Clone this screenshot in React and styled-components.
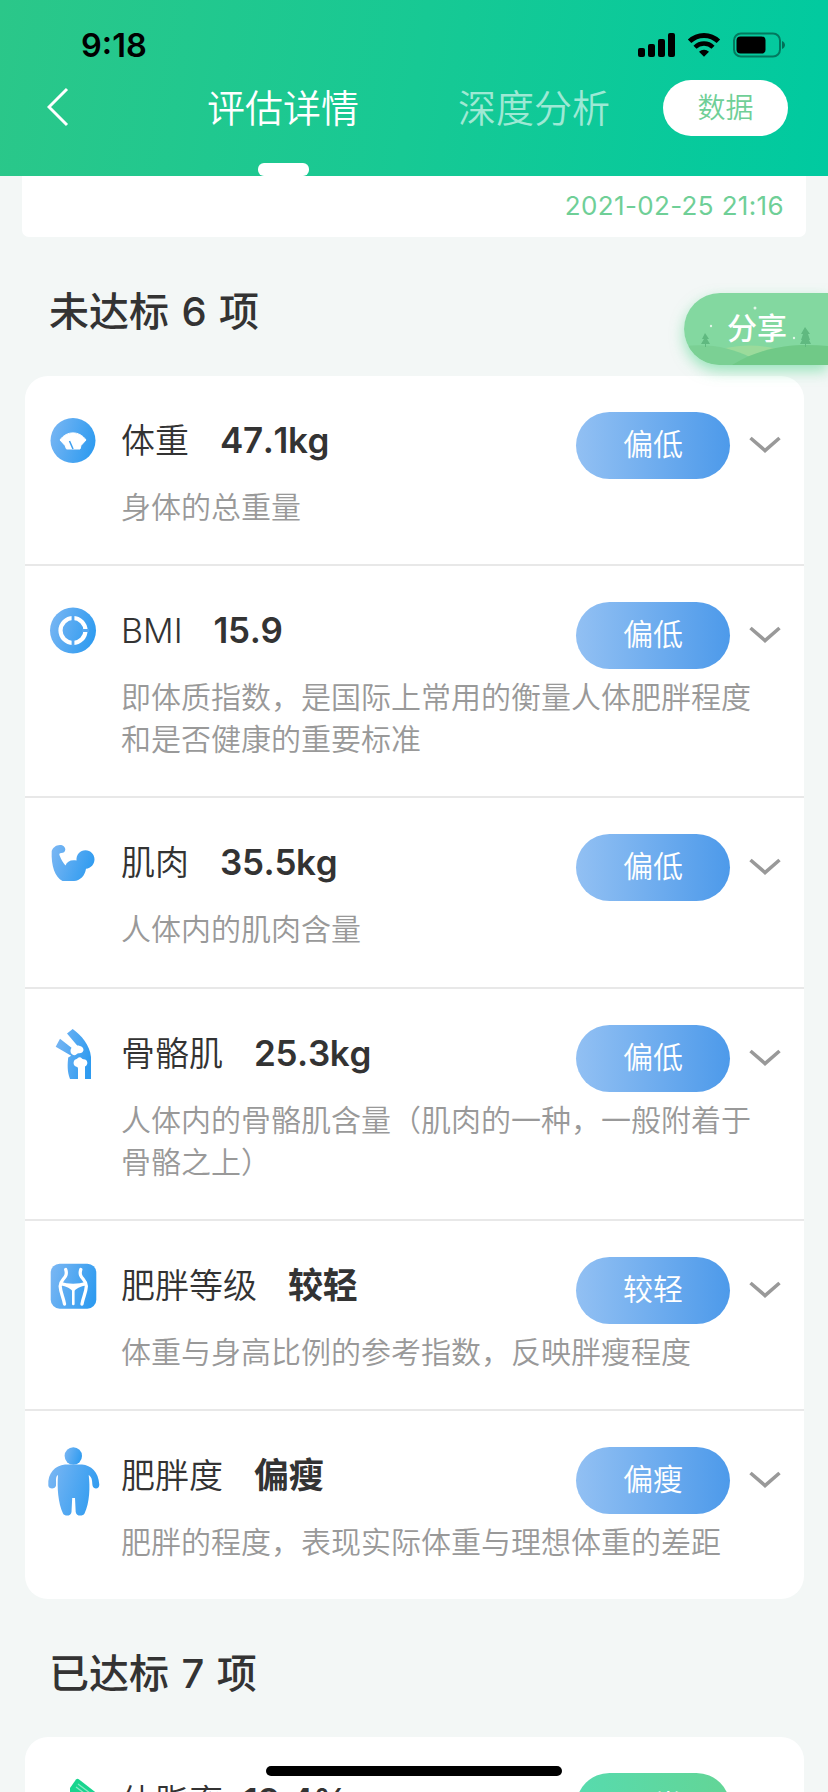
import React from "react";
import styled, { createGlobalStyle } from "styled-components";

const GlobalStyle = createGlobalStyle`
  * {
    box-sizing: border-box;
  }
  body {
    margin: 0;
    background: #f3f7f6;
    font-family: Inter, "Noto Sans CJK SC", sans-serif;
    color: #333;
  }
`;

const Screen = styled.div`
  position: relative;
  width: 828px;
  height: 1792px;
  overflow: hidden;
  background: #f3f7f6;
`;

const Header = styled.header`
  height: 176px;
  background: linear-gradient(100deg, #2bc789 0%, #17c994 50%, #00caa0 100%);
`;

const StatusBar = styled.div`
  height: 80px;
  padding: 10px 43px 0 81px;
  display: flex;
  align-items: center;
  justify-content: space-between;
  color: #000;
`;

const Clock = styled.span`
  padding-top: 2px;
  font-size: 32.5px;
  font-weight: 600;
  line-height: 40px;
`;

const NavBar = styled.nav`
  height: 96px;
  padding: 0 40px 0 47px;
  display: flex;
  align-items: flex-start;
`;

const BackIcon = styled.svg`
  width: 22px;
  height: 40px;
  margin-top: 7px;
`;

const Tab = styled.div`
  width: 152px;
  height: 96px;
  margin-left: ${(props) => props.$gap}px;
  display: flex;
  flex-direction: column;
  align-items: center;
  justify-content: space-between;
  font-size: 38px;
  font-weight: 350;
  line-height: 56px;
  white-space: nowrap;
  color: ${(props) => (props.$active ? "#fff" : "rgba(255, 255, 255, 0.6)")};
`;

const TabMark = styled.span`
  width: 51px;
  height: 13px;
  border-radius: 6px;
  background: #fff;
`;

const DataButton = styled.button`
  width: 125px;
  height: 56px;
  margin-left: auto;
  padding: 0;
  border: none;
  border-radius: 28px;
  background: #fff;
  color: #6fcf97;
  font-family: inherit;
  font-size: 28px;
  font-weight: 350;
  line-height: 57px;
`;

const DateCard = styled.div`
  height: 61px;
  margin: 0 22px;
  padding: 10px 22px 0 0;
  border-radius: 0 0 7px 7px;
  background: #fff;
  color: #6fcf97;
  font-size: 26px;
  line-height: 40px;
  letter-spacing: 0.35px;
  text-align: right;
`;

const SectionTitle = styled.h2`
  height: 60px;
  margin: ${(props) => props.$top}px 0 ${(props) => props.$bottom}px 49px;
  font-size: 40px;
  font-weight: 500;
  line-height: 61px;
  word-spacing: 1.8px;
`;

const Card = styled.section`
  margin: 0 24px 0 25px;
  border-radius: 23px;
  background: #fff;
`;

const Row = styled.article`
  display: flex;
  align-items: flex-start;
  padding: 36px 0;
  border-bottom: 2px solid #e8e8e8;

  &:last-child {
    border-bottom: none;
  }
`;

const IconSlot = styled.div`
  width: 96px;
  height: 70px;
  padding-left: 18px;
  flex: none;

  svg {
    display: block;
  }
`;

const RowBody = styled.div`
  flex: 1;
`;

const RowHead = styled.div`
  height: 67px;
  display: flex;
  align-items: flex-start;
`;

const Name = styled.span`
  font-size: 34px;
  font-weight: 350;
  line-height: 58px;
`;

const Value = styled.span`
  margin-left: ${(props) => props.$gap || 31}px;
  font-size: 35px;
  font-weight: 600;
  font-kerning: none;
  letter-spacing: -0.35px;
  line-height: 56px;
  flex: 1;
`;

const Pill = styled.span`
  width: 154px;
  height: 67px;
  border-radius: 34px;
  background: ${(props) =>
    props.$good
      ? "linear-gradient(90deg, #57dbae, #63d596)"
      : "linear-gradient(90deg, #92c0f3, #4d9aea)"};
  color: #fff;
  font-size: 30px;
  font-weight: 350;
  line-height: 64px;
  text-align: center;
`;

const ArrowIcon = styled.svg`
  width: 32px;
  height: 18px;
  margin: 24px 23px 0 19px;
`;

const Description = styled.p`
  width: 640px;
  margin: 7px 0 0;
  color: #999;
  font-size: 30px;
  font-weight: 350;
  line-height: 42.15px;
`;

const ShareTag = styled.div`
  position: absolute;
  top: 293px;
  right: 0;
  width: 144px;
  height: 72px;
  padding-left: 43px;
  border-radius: 36px 0 0 36px;
  box-shadow: 0 6px 14px rgba(80, 214, 140, 0.55);
  color: #fff;
  font-size: 30px;
  font-weight: 500;
  line-height: 71px;

  svg {
    position: absolute;
    inset: 0;
    border-radius: 36px 0 0 36px;
  }
  span {
    position: relative;
  }
`;

const HomeIndicator = styled.div`
  position: absolute;
  top: 1766px;
  left: 266px;
  width: 296px;
  height: 10px;
  border-radius: 5px;
  background: #000;
`;

const StatusIcons = () => (
  <svg width="150" height="28" viewBox="0 0 150 28">
    <rect x="3" y="17" width="7" height="9" rx="2" />
    <rect x="13" y="13" width="7" height="13" rx="2" />
    <rect x="23" y="8" width="7" height="18" rx="2" />
    <rect x="33" y="2" width="7" height="24" rx="2" />
    <g fill="none" stroke="#000" strokeWidth="5">
      <path d="M54.6 10.3a20.5 20.5 0 0 1 28.8 0" />
      <path d="M60 16.2a12.8 12.8 0 0 1 18 0" strokeWidth="4.4" />
    </g>
    <path d="M69 25.8l-5-5a7.4 7.4 0 0 1 10 0z" />
    <rect x="99" y="2.5" width="46" height="23" rx="7" fill="none" stroke="#000" strokeOpacity="0.4" strokeWidth="2" />
    <rect x="101.5" y="5.5" width="29" height="17" rx="4" />
    <path d="M147 10c4 2 4 6 0 8z" opacity="0.45" />
  </svg>
);

const BlueGradient = ({ id }) => (
  <linearGradient id={id} x1="0" y1="0.3" x2="1" y2="0.6">
    <stop offset="0" stopColor="#76b5f3" />
    <stop offset="1" stopColor="#2e9bf0" />
  </linearGradient>
);

const WeightIcon = () => (
  <svg width="60" height="70" viewBox="0 0 60 70">
    <defs><BlueGradient id="weight" /></defs>
    <circle cx="30" cy="28.5" r="22.5" fill="url(#weight)" />
    <path d="M17 28c6.500-9.500 19.500-9.500 26 0l-5 5.500-1 3.500H23.500l-1.500-3.500z" fill="#fff" stroke="#fff" strokeLinejoin="round" />
    <path d="M26.5 29l3.500 8" stroke="#3d9ff0" strokeWidth="1.5" />
  </svg>
);

const BmiIcon = () => (
  <svg width="60" height="70" viewBox="0 0 60 70">
    <defs><BlueGradient id="bmi" /></defs>
    <circle cx="30" cy="28.5" r="23" fill="url(#bmi)" />
    <circle cx="30" cy="28.5" r="12.5" fill="none" stroke="#fff" strokeWidth="4.2" />
    <path d="M30 13v6M30 38v6M39 28.5h7" stroke="#55a8f2" strokeWidth="2.8" />
  </svg>
);

const MuscleIcon = () => (
  <svg width="60" height="70" viewBox="0 0 60 70">
    <defs><BlueGradient id="muscle" /></defs>
    <path
      d="M8.7 17c1-3 4-6 8.300-6 3 0 5.300 2 5.300 4.500 0 2.500-2 3.500-4 3.500-2 0-2.500 1-1.500 3 1.500 4 3.500 7 5.700 9.500 1.500-4 5-6 11-5C33 21 37 16.300 42.500 16.300c5 0 9 4 9 9 0 5-3.500 9-8.500 9.500-1 7-6 12-12 12.200H19.500C12 43 8 32 8.700 17z"
      fill="url(#muscle)"
    />
  </svg>
);

const BoneIcon = () => (
  <svg width="60" height="70" viewBox="0 0 60 70">
    <defs><BlueGradient id="bone" /></defs>
    <path
      d="M24 8.5l5.700-4.500C38 10 47 20 48 32v22h-6V41.500c4-2 2.500-7.500-1.500-7.300-1.500 0-2-2-3.800-2-1.700 0-2 1.500-3.700 2-3.500 1-3 7 .5 7.500.8 0 1.500.8 1.500 2V54h-8c-3-8-2.500-15-1.800-21.500l3-1.700-15.500-9 4.300-8 11.500 9c-2 3-1 7 3 7.500 1.500 0 2.500-2 4.300-2 5 .5 6.500-5 2-7-1-.5-3 0-4.500-1.800z"
      fill="url(#bone)"
    />
  </svg>
);

const BodyShapeIcon = () => (
  <svg width="60" height="70" viewBox="0 0 60 70">
    <defs><BlueGradient id="shape" /></defs>
    <rect x="7.7" y="6.7" width="45.6" height="45" rx="9" fill="url(#shape)" />
    <g fill="none" stroke="#fff" strokeWidth="3.3" strokeLinecap="round">
      <path d="M22.7 12.5c3 9-6 9-5.500 17 .3 6 3 10 4.300 17.500M37.800 12.500c-3 9 6 9 5.500 17-.3 6-3 10-4.300 17.500" />
      <path d="M30.3 34v13" strokeWidth="2.6" />
    </g>
    <path d="M17.5 24.5c7 3 18 3 25.500 0l.5 4c-6 .5-11 3-13.200 7-2-4-7-6.500-13-7z" fill="#fff" />
  </svg>
);

const FatBodyIcon = () => (
  <svg width="60" height="72" viewBox="0 0 60 72">
    <defs><BlueGradient id="fat" /></defs>
    <g fill="url(#fat)">
      <circle cx="30.3" cy="9" r="8.7" />
      <path d="M22 17.5h17c9 1 16.500 7 17.300 20 .2 5-6 5-6.800 1-.5-4 0-8-3.800-10.500 1.500 12 1 28-4.200 38.500-1.500 3-8.500 3-8.800-1.500L32 51h-2.800L28.500 65c-.3 4.500-7 4.500-8.500 1.500C15 56 14 40 15 28c-3 2-1.500 6-2 10.500-.5 4-7.500 4-7.700 0C4.500 26 12 18.500 22 17.500z" />
    </g>
  </svg>
);

const FatRateIcon = () => (
  <svg width="60" height="70" viewBox="0 0 60 70">
    <path d="M27 22v-7l6-8.500c.8-1 1.800-1 2.800-.3L56 22 44 44 27 32z" fill="#19d58f" />
    <path d="M35 11l12 9M33 14l12 9" stroke="#8be9c4" strokeWidth="1.3" />
  </svg>
);

const failedItems = [
  { icon: <WeightIcon />, name: "体重", value: "47.1kg", level: "偏低", text: "身体的总重量" },
  { icon: <BmiIcon />, name: "BMI", value: "15.9", level: "偏低", text: "即体质指数，是国际上常用的衡量人体肥胖程度和是否健康的重要标准" },
  { icon: <MuscleIcon />, name: "肌肉", value: "35.5kg", level: "偏低", text: "人体内的肌肉含量" },
  { icon: <BoneIcon />, name: "骨骼肌", value: "25.3kg", level: "偏低", text: "人体内的骨骼肌含量（肌肉的一种，一般附着于骨骼之上）" },
  { icon: <BodyShapeIcon />, name: "肥胖等级", value: "较轻", level: "较轻", text: "体重与身高比例的参考指数，反映胖瘦程度" },
  { icon: <FatBodyIcon />, name: "肥胖度", value: "偏瘦", level: "偏瘦", text: "肥胖的程度，表现实际体重与理想体重的差距" },
];

const passedItems = [
  { icon: <FatRateIcon />, name: "体脂率", value: "18.4%", level: "正常", good: true, gap: 20 },
];

const Item = ({ icon, name, value, level, text, good, gap }) => (
  <Row>
    <IconSlot>{icon}</IconSlot>
    <RowBody>
      <RowHead>
        <Name>{name}</Name>
        <Value $gap={gap}>{value}</Value>
        <Pill $good={good}>{level}</Pill>
        <ArrowIcon viewBox="0 0 32 18">
          <path d="M1.5 2L16 14.5 30.5 2" fill="none" stroke="#999" strokeWidth="3.6" />
        </ArrowIcon>
      </RowHead>
      {text && <Description>{text}</Description>}
    </RowBody>
  </Row>
);

export default function App() {
  return (
    <Screen>
      <GlobalStyle />
      <Header>
        <StatusBar>
          <Clock>9:18</Clock>
          <StatusIcons />
        </StatusBar>
        <NavBar>
          <BackIcon viewBox="0 0 22 40">
            <path d="M20 2L2 20l18 18" fill="none" stroke="#fff" strokeWidth="3" />
          </BackIcon>
          <Tab $active $gap={138}>
            评估详情
            <TabMark />
          </Tab>
          <Tab $gap={99}>深度分析</Tab>
          <DataButton>数据</DataButton>
        </NavBar>
      </Header>
      <DateCard>2021-02-25 21:16</DateCard>
      <SectionTitle $top={44} $bottom={35}>未达标 6 项</SectionTitle>
      <Card>
        {failedItems.map((item) => (
          <Item key={item.name} {...item} />
        ))}
      </Card>
      <SectionTitle $top={44} $bottom={34}>已达标 7 项</SectionTitle>
      <Card>
        {passedItems.map((item) => (
          <Item key={item.name} {...item} />
        ))}
      </Card>
      <ShareTag>
        <svg width="144" height="72" viewBox="0 0 144 72">
          <rect width="144" height="72" fill="#83d8a0" />
          <path d="M40 56c18-5 38-4 52 0l-26 10z" fill="#9bdb9b" />
          <path d="M0 53c26-3 48 2 66 11v8H0z" fill="#7bd094" />
          <path d="M48 72c30-18 60-22 96-19v19z" fill="#70c987" />
          <path d="M21 40l4 6-2 0 3 5h-4v3h-1v-3h-4l3-5h-2z" fill="#60b980" />
          <path d="M121 34l5 7h-2l2 6h-1l2 4h-5v3h-1v-3h-5l2-4h-1l2-6h-2z" fill="#60b980" />
          <g fill="#fff" opacity="0.75">
            <circle cx="27" cy="33" r="1.2" />
            <circle cx="71" cy="15" r="1.5" />
            <circle cx="110" cy="45" r="1.2" />
          </g>
        </svg>
        <span>分享</span>
      </ShareTag>
      <HomeIndicator />
    </Screen>
  );
}
